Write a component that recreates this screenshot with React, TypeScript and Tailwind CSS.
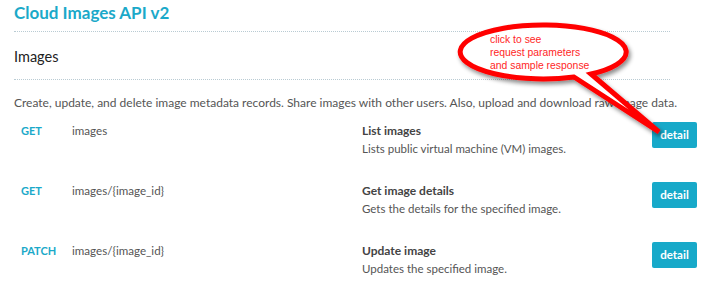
import React from "react";

const rows = [
  { method: "GET", path: "images", title: "List images", desc: "Lists public virtual machine (VM) images." },
  { method: "GET", path: "images/{image_id}", title: "Get image details", desc: "Gets the details for the specified image." },
  { method: "PATCH", path: "images/{image_id}", title: "Update image", desc: "Updates the specified image." },
];

function Callout() {
  return (
    <div className="pointer-events-none absolute left-0 top-0 h-[294px] w-[705px]">
      <svg width="705" height="294" className="absolute left-0 top-0">
        <defs>
          <filter id="sh" x="-20%" y="-20%" width="140%" height="140%">
            <feDropShadow dx="2" dy="3" stdDeviation="2" floodColor="#000" floodOpacity="0.45" />
          </filter>
        </defs>
        <path
          d="M 574 77 A 83 27 0 1 1 591 74 L 659 132 Z"
          fill="#ffffff"
          stroke="#ff0000"
          strokeWidth="5"
          strokeLinejoin="miter"
          strokeMiterlimit="8"
          filter="url(#sh)"
        />
      </svg>
      <div
        className="absolute left-[490px] top-[34px] text-[10.4px] leading-[12.8px] text-[#ff2626]"
        style={{ fontFamily: '"Liberation Sans", Arial, sans-serif' }}
      >
        <div>click to see</div>
        <div>request parameters</div>
        <div>and sample response</div>
      </div>
    </div>
  );
}

export default function App() {
  return (
    <div
      className="relative h-[294px] w-[705px] overflow-hidden bg-white pl-[14px] pr-[8px]"
      style={{ fontFamily: 'Lato, "Open Sans", sans-serif' }}
    >
      <div className="h-[32px] w-[656px] border-b border-dotted border-[#b9cbd3]">
        <h1 className="text-[17px] font-bold leading-[26px] text-[#1ba9c9]">Cloud Images API v2</h1>
      </div>
      <div className="flex h-[48px] w-[656px] items-center border-b border-dotted border-[#b9cbd3] pt-[2px]">
        <h2 className="text-[14.5px] leading-[20px] text-[#222]">Images</h2>
      </div>
      <p className="mt-[14px] whitespace-nowrap text-[12px] leading-[18px] text-[#555]">
        Create, update, and delete image metadata records. Share images with other users. Also, upload and download raw image data.
      </p>
      <div className="mt-[10px] flex flex-col gap-[24px]">
        {rows.map((r, i) => (
          <div key={i} className="flex items-start">
            <div className="w-[58px] pl-[7px] text-[11px] font-bold leading-[18px] text-[#1ba9c9]">{r.method}</div>
            <div className="w-[290px] text-[11.6px] leading-[18px] text-[#555]">{r.path}</div>
            <div className="flex-1">
              <div className="text-[12px] font-bold leading-[18px] text-[#444]">{r.title}</div>
              <div className="text-[11.5px] leading-[18px] text-[#555]">{r.desc}</div>
            </div>
            <button className="h-[26px] w-[45px] rounded-[2px] bg-[#17a9c9] text-[11.5px] font-bold text-white">detail</button>
          </div>
        ))}
      </div>
      <Callout />
    </div>
  );
}
